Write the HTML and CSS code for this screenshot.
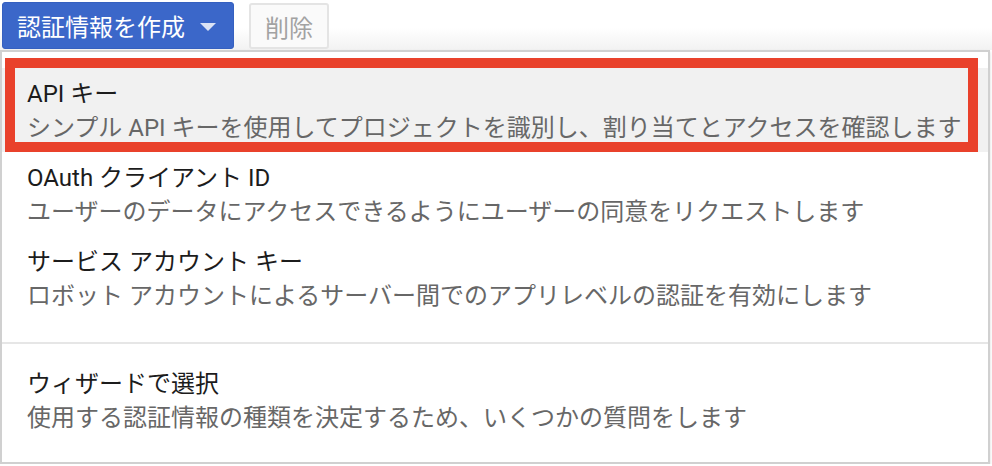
FILE: index.html
```html
<!DOCTYPE html>
<html lang="ja">
<head>
    <meta charset="UTF-8">
    <title>認証情報</title>
    <meta name="viewport" content="width=device-width, initial-scale=1">
    <link rel="stylesheet" href="styles.css">
</head>
<body>

<!-- Toolbar -->
<div class="toolbar">
    <button class="btn btn-primary">
        認証情報を作成
        <svg class="caret" width="16" height="8" viewBox="0 0 16 8"><polygon points="0,0 16,0 8,8"/></svg>
    </button>
    <button class="btn btn-disabled" disabled>削除</button>
</div>

<!-- Dropdown menu -->
<div class="menu">
    <div class="menu-group first">
        <div class="menu-item is-hover">
            <div class="item-title">API キー</div>
            <div class="item-desc">シンプル API キーを使用してプロジェクトを識別し、割り当てとアクセスを確認します</div>
            <span class="highlight"></span>
        </div>
        <div class="menu-item">
            <div class="item-title">OAuth クライアント ID</div>
            <div class="item-desc">ユーザーのデータにアクセスできるようにユーザーの同意をリクエストします</div>
        </div>
        <div class="menu-item">
            <div class="item-title">サービス アカウント キー</div>
            <div class="item-desc">ロボット アカウントによるサーバー間でのアプリレベルの認証を有効にします</div>
        </div>
    </div>
    <div class="menu-sep"></div>
    <div class="menu-group last">
        <div class="menu-item">
            <div class="item-title">ウィザードで選択</div>
            <div class="item-desc">使用する認証情報の種類を決定するため、いくつかの質問をします</div>
        </div>
    </div>
</div>

</body>
</html>
```

FILE: styles.css
```css
body {
    margin: 0;
    background: #fff;
    font-family: Roboto, "Noto Sans CJK JP", sans-serif;
}

.toolbar {
    display: flex;
    align-items: flex-start;
    gap: 15px;
    height: 50px;
    box-sizing: border-box;
    padding: 2px 0 0 2px;
    background: linear-gradient(to bottom, #fff 55%, #f2f2f2);
}

.btn {
    font-family: inherit;
    font-size: 24px;
    box-sizing: border-box;
    display: flex;
    align-items: center;
    border-radius: 3px;
}
.btn-primary {
    height: 47px;
    gap: 15px;
    padding: 0 17px 0 14px;
    background: #3b67c9;
    border: 1px solid #3560c0;
    color: #fff;
}
.caret {
    fill: #dbe3f5;
    margin-top: 2px;
}
.btn-disabled {
    height: 46px;
    margin-top: 1px;
    padding: 0 14px;
    background: #fafafa;
    border: 2px solid #e4e4e4;
    color: #a2a2a2;
}

.menu {
    width: 990px;
    box-sizing: border-box;
    background: #fff;
    border: 2px solid #d0d0d0;
    box-shadow: 0 2px 3px rgba(0,0,0,0.15);
}

.menu-group.first {
    padding: 16px 0 22px;
}
.menu-group.last {
    padding: 14px 0 20px;
}
.menu-sep {
    height: 2px;
    background: #e6e6e6;
}

.menu-item {
    position: relative;
    height: 84px;
    box-sizing: border-box;
    padding: 10px 25px 0;
}
.menu-item.is-hover {
    background: #f1f1f1;
}

.item-title {
    font-size: 24px;
    line-height: 32px;
    color: #1c1c1c;
    white-space: nowrap;
}
.item-desc {
    font-size: 24px;
    line-height: 32px;
    margin-top: 2px;
    color: #676767;
    white-space: nowrap;
}

/* red annotation frame around the hovered item */
.highlight {
    position: absolute;
    top: -10px;
    left: 3px;
    right: 10px;
    bottom: 0;
    border: 10px solid #e9412b;
}
```
